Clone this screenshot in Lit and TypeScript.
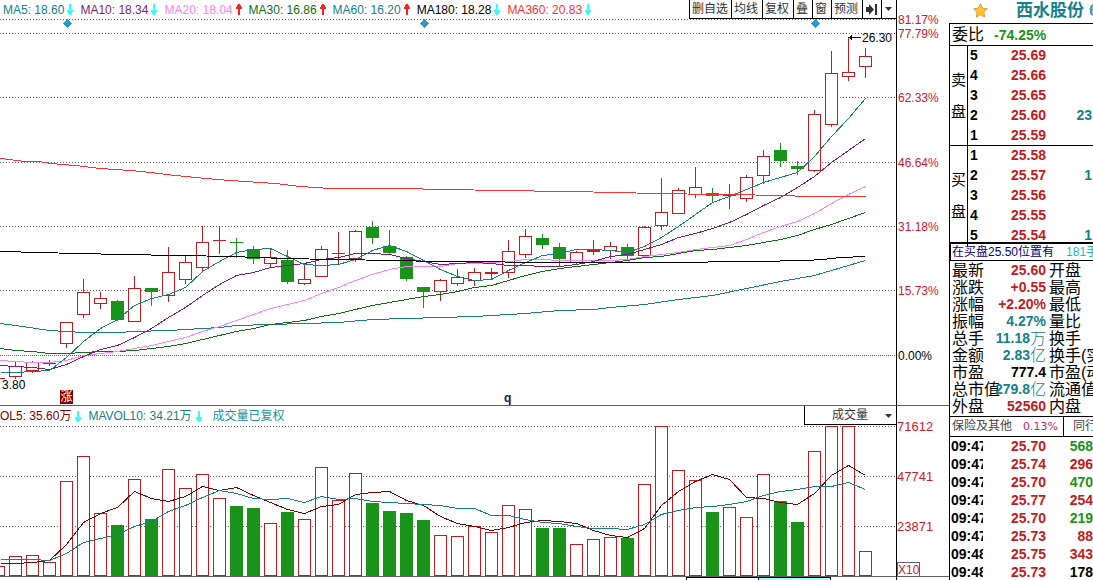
import { LitElement, html, svg, css } from "lit";
import { customElement } from "lit/decorators.js";
import { classMap } from "lit/directives/class-map.js";

const PLOT_W = 896;
const PRICE_TOP = 19;
const PRICE_H = 386;
const VOL_TOP = 425;
const VOL_H = 151;

// direction, high, body top, body bottom, low, volume top
type Bar = [string, number, number, number, number, number];
const FIRST_X = -2;
const STEP = 17;
const bars: Bar[] = [
  ["u", 378, 378, 378, 378, 566], ["u", 362, 366, 376, 378, 556], ["u", 361, 362, 370, 372, 555],
  ["u", 360, 363, 363, 365, 562], ["u", 322, 322, 343, 347, 481], ["u", 279, 292, 314, 317, 456],
  ["u", 292, 298, 303, 308, 513], ["d", 300, 301, 319, 320, 525], ["u", 276, 288, 321, 321, 479],
  ["d", 288, 288, 291, 305, 519], ["u", 247, 272, 295, 301, 469], ["u", 255, 262, 279, 283, 488],
  ["u", 226, 242, 267, 270, 474], ["u", 226, 240, 240, 253, 498], ["d", 238, 242, 242, 257, 506],
  ["d", 246, 249, 258, 263, 508], ["u", 248, 257, 263, 267, 523], ["d", 250, 260, 281, 283, 512],
  ["u", 265, 279, 283, 284, 519], ["u", 246, 249, 276, 276, 467], ["u", 232, 253, 253, 263, 500],
  ["u", 230, 231, 258, 261, 473], ["d", 221, 227, 237, 243, 503], ["d", 230, 246, 252, 254, 511],
  ["d", 256, 257, 278, 280, 513], ["d", 287, 287, 291, 307, 520], ["u", 279, 280, 291, 300, 535],
  ["u", 269, 277, 283, 285, 536], ["u", 268, 272, 280, 285, 526], ["u", 268, 272, 273, 279, 532],
  ["u", 240, 251, 272, 277, 505], ["u", 229, 236, 254, 257, 509], ["d", 234, 238, 244, 248, 528],
  ["d", 243, 247, 258, 265, 528], ["u", 251, 252, 262, 263, 544], ["u", 240, 250, 251, 254, 539],
  ["u", 242, 246, 250, 258, 537], ["d", 244, 247, 255, 258, 538], ["u", 226, 227, 255, 255, 484],
  ["u", 178, 212, 225, 229, 426], ["u", 188, 190, 213, 213, 470], ["u", 167, 187, 194, 197, 480],
  ["d", 188, 193, 195, 202, 512], ["u", 184, 195, 195, 208, 507], ["u", 175, 177, 198, 201, 517],
  ["u", 150, 156, 175, 183, 474], ["d", 143, 150, 160, 166, 501], ["d", 161, 166, 168, 174, 522],
  ["u", 110, 114, 170, 171, 451], ["u", 51, 73, 124, 126, 426], ["u", 37, 72, 76, 80, 426],
  ["u", 48, 56, 66, 77, 551],
];

const perBar = (...ys: number[]): number[][] => ys.map((y, i) => [i ? FIRST_X + i * STEP : 0, y]);

const priceLines: { cls: string; pts: number[][] }[] = [
  { cls: "teal", pts: [[0, 323], [15, 325], [49, 330], [83, 332], [117, 332], [134, 331], [168, 330], [202, 328], [219, 327], [236, 325], [270, 324], [304, 323], [338, 322], [372, 319], [406, 318], [440, 317], [474, 316], [508, 314], [525, 313], [559, 310], [593, 309], [610, 307], [644, 304], [678, 299], [712, 295], [746, 288], [780, 281], [814, 275], [831, 270], [848, 265], [865, 260]] },
  { cls: "green", pts: perBar(348, 350, 351, 353, 353, 352, 351, 351, 350, 348, 346, 343, 339, 335, 331, 328, 324, 322, 320, 316, 313, 309, 305, 302, 299, 296, 294, 291, 287, 285, 280, 275, 271, 268, 266, 264, 262, 260, 257, 256, 253, 250, 249, 247, 245, 242, 239, 235, 229, 224, 218, 212) },
  { cls: "pink", pts: perBar(360, 361, 362, 362, 360, 355, 353, 351, 348, 345, 341, 337, 331, 326, 320, 314, 308, 304, 300, 293, 287, 280, 274, 269, 266, 266, 266, 263, 263, 262, 261, 259, 259, 260, 260, 260, 260, 259, 256, 254, 252, 249, 247, 245, 239, 232, 226, 221, 213, 203, 194, 186) },
  { cls: "purple", pts: perBar(365, 366, 367, 369, 364, 356, 349, 345, 337, 328, 317, 307, 295, 284, 275, 272, 267, 265, 263, 259, 257, 253, 253, 254, 258, 261, 264, 263, 262, 263, 265, 265, 266, 266, 264, 261, 256, 254, 249, 244, 237, 233, 228, 222, 214, 205, 197, 187, 176, 162, 150, 138) },
  { cls: "teal", pts: perBar(372, 372, 371, 370, 357, 341, 328, 319, 305, 298, 294, 287, 271, 261, 252, 249, 248, 256, 264, 265, 264, 259, 250, 245, 251, 260, 269, 276, 280, 279, 270, 262, 255, 253, 249, 249, 250, 252, 246, 237, 226, 214, 202, 196, 189, 182, 177, 172, 156, 136, 118, 98) },
  { cls: "black", pts: [[0, 251], [40, 252], [75, 253], [125, 254], [175, 255], [236, 256], [253, 257], [287, 258], [330, 259], [398, 260], [432, 261], [500, 261], [508, 262], [703, 262], [712, 261], [755, 261], [805, 260], [822, 259], [840, 257], [865, 256]] },
  { cls: "red", pts: [[0, 158], [25, 161], [38, 161], [50, 163], [75, 165], [100, 168], [130, 170], [150, 172], [175, 175], [205, 178], [230, 180], [275, 183], [300, 186], [330, 188], [397, 188], [448, 189], [499, 190], [567, 191], [618, 192], [653, 193], [720, 194], [788, 195], [800, 196], [865, 196]] },
];

const volumeLines: { cls: string; pts: number[][] }[] = [
  { cls: "maroon", pts: perBar(563, 563, 562, 560, 544, 522, 513, 507, 491, 498, 501, 496, 486, 490, 487, 495, 502, 509, 513, 506, 504, 494, 492, 491, 500, 505, 516, 523, 526, 530, 527, 522, 520, 521, 523, 530, 535, 537, 528, 505, 491, 481, 474, 479, 497, 498, 502, 504, 493, 475, 465, 475) },
  { cls: "teal", pts: perBar(559, 559, 559, 560, 553, 542, 538, 534, 526, 521, 511, 505, 497, 490, 493, 498, 499, 498, 502, 496, 499, 498, 501, 502, 503, 504, 505, 508, 508, 515, 515, 519, 522, 523, 526, 528, 528, 529, 524, 514, 510, 507, 506, 504, 501, 495, 491, 489, 486, 486, 482, 489) },
];

const priceTicks: [number, string][] = [[19, "81.17%"], [33, "77.79%"], [97, "62.33%"], [162, "46.64%"], [226, "31.18%"], [290, "15.73%"], [355, "0.00%"]];
const volumeTicks: [number, string][] = [[426, "71612"], [476, "47741"], [526, "23871"]];

const averages: [string, string, string, boolean][] = [
  ["MA5", "18.60", "teal", false], ["MA10", "18.34", "purple", false], ["MA20", "18.04", "pink", true],
  ["MA30", "16.86", "green", true], ["MA60", "16.20", "teal", true], ["MA180", "18.28", "black", false],
  ["MA360", "20.83", "red", false],
];

const asks: [string, string, string][] = [["5", "25.69", ""], ["4", "25.66", ""], ["3", "25.65", ""], ["2", "25.60", "23"], ["1", "25.59", ""]];
const bids: [string, string, string][] = [["1", "25.58", ""], ["2", "25.57", "1"], ["3", "25.56", ""], ["4", "25.55", ""], ["5", "25.54", "1"]];

const stats: [string, string, string, string, string][] = [
  ["最新", "25.60", "", "up", "开盘"], ["涨跌", "+0.55", "", "up", "最高"], ["涨幅", "+2.20%", "", "up", "最低"],
  ["振幅", "4.27%", "", "flat", "量比"], ["总手", "11.18", "万", "flat", "换手"], ["金额", "2.83", "亿", "flat", "换手(实)"],
  ["市盈", "777.4", "", "", "市盈(动)"], ["总市值", "279.8", "亿", "flat", "流通值"], ["外盘", "52560", "", "up", "内盘"],
];

const trades: [string, string, string, string][] = [
  ["09:47", "25.70", "568", "down"], ["09:47", "25.74", "296", "up"], ["09:47", "25.70", "470", "down"], ["09:47", "25.77", "254", "up"],
  ["09:47", "25.70", "219", "down"], ["09:47", "25.73", "88", "up"], ["09:48", "25.75", "343", "up"], ["09:48", "25.73", "178", ""],
];

const trendArrow = (up: boolean) => html`<svg class="trend ${up ? "rising" : "falling"}" width="6" height="11" viewBox="0 0 6 11" aria-hidden="true">
  <path d=${up ? "M2 11V5H0V3H1V1H2V0H4V1H5V3H6V5H4V11Z" : "M2 0V6H0V8H1V10H2V11H4V10H5V8H6V6H4V0Z"} /></svg>`;

const caret = html`<svg class="caret" width="7" height="4" viewBox="0 0 7 4" aria-hidden="true"><path d="M0 0H7L3.5 4Z" /></svg>`;

@customElement("app-root")
export class AppRoot extends LitElement {
  static styles = css`
    :host { display: grid; grid-template-columns: minmax(0, 1fr) 144px; height: 100vh; overflow: hidden; background: #fff; color: #000;
      font: 12px/18px "Liberation Sans", "Noto Sans CJK SC", sans-serif; white-space: nowrap; }
    * { box-sizing: border-box; }
    svg { display: block; }
    button, select { font: inherit; color: #333; background: #fff; margin: 0; border: 0 solid #000; border-radius: 0; }

    .charts { display: grid; grid-template-columns: minmax(0, 1fr) 52px; grid-template-rows: 19px 387px 19px 152px 1fr; }
    .left { border-right: 1px solid #000; min-width: 0; }
    .ruled { border-bottom: 1px solid #606060; }
    .head { display: flex; justify-content: space-between; overflow: hidden; }
    .legend { display: flex; gap: 7px; padding-left: 3px; min-width: 0; overflow: hidden; }
    .legend.volume { padding: 1px 0 0; }
    .entry { display: flex; gap: 3px; align-items: center; flex: none; }
    .volume .entry { gap: 4px; }
    .note { color: #1890a0; padding-left: 4px; }
    .tools { display: flex; flex: none; }
    .tools button { display: flex; align-items: center; padding: 0 3px 0 2px; border-width: 0 0 1px 1px; height: 19px; line-height: 20px; }
    .tools .pad { padding: 0 4px 0 2px; }
    .tools .icon { padding: 0 4px 0 3px; }
    .picker { display: grid; flex: none; width: 92px; }
    .picker select { grid-area: 1 / 1; appearance: none; padding: 0 0 0 27px; border-width: 0 0 1px 1px; height: 19px; }
    .picker .caret { grid-area: 1 / 1; justify-self: end; align-self: center; margin-right: 4px; pointer-events: none; }
    .caret, .skip { fill: #333; }

    .trend.falling { fill: #3ff; }
    .trend.rising { fill: #ff2020; }
    .teal { color: #13808a; } .purple { color: #801b77; } .pink { color: #ff80ff; } .green { color: #126e12; }
    .black { color: #000; } .red { color: #ff3030; } .maroon { color: #800000; }

    .plot { position: relative; overflow: hidden; }
    .canvas { width: 100%; shape-rendering: crispEdges; }
    .canvas * { vector-effect: non-scaling-stroke; }
    .grid { stroke: #606060; stroke-dasharray: 1 2; }
    .zero { stroke-dasharray: 1 1; }
    .line { fill: none; stroke: currentColor; }
    .u { stroke: #c01c22; fill: #fff; }
    .d { stroke: #1a931a; fill: #1a931a; }
    .diamond { fill: #2b9ac8; }
    .pointer { stroke: #000; }
    .mark { position: absolute; line-height: 14px; }
    .badge { background: #800000; color: #fff; width: 13px; text-align: center; }
    .event { color: #0a2050; font-weight: 700; }

    .axis { overflow: visible; fill: #c8202c; }
    .axis .base { fill: #000; }
    .axis .big { font-size: 13px; }
    .unit { fill: none; stroke: #606060; shape-rendering: crispEdges; }
    .strip { display: flex; justify-content: flex-end; padding-right: 65px; }
    .tab { width: 72px; border: solid #000; border-width: 1px 0 0 1px; }
    .tab.on { width: 73px; background: #9ff; border-right-width: 1px; }

    .quote { display: flex; flex-direction: column; min-width: 0; overflow: hidden; }
    .name { display: flex; align-items: center; height: 23px; flex: none; margin: 0; padding: 0 0 2px 24px; gap: 28px; font-size: 17px; line-height: 20px; font-weight: 700; color: #13808a; }
    .name svg, .code { flex: none; }
    .stock { display: flex; gap: 5px; flex: none; }
    .code { color: #2fa3b5; }
    .panel { display: flex; flex-direction: column; flex: 1; min-height: 0; border: solid #000; border-width: 1px 0 0 1px; }
    .ratio { display: flex; gap: 10px; height: 22px; padding-left: 2px; line-height: 22px; border-bottom: 1px solid #000; font-size: 16px; }
    .num { font-size: 14px; font-weight: 700; }
    .up { color: #c01c22; } .down { color: #1a931a; } .flat { color: #13808a; }
    .book { display: grid; grid-template-columns: 18px minmax(0, 1fr); border-bottom: 1px solid #000; height: 100px; }
    .book.last { height: 98px; border-bottom-width: 2px; }
    .side { display: flex; flex-direction: column; align-items: center; justify-content: center; gap: 16px; font-size: 15px; line-height: 16px; border-right: 1px solid #000; }
    table { width: 100%; table-layout: fixed; border-collapse: collapse; font-size: 14px; font-weight: 700; }
    th, td { padding: 0; text-align: right; overflow: hidden; font-weight: 700; vertical-align: top; }
    th { text-align: left; }
    .book tr { height: 20px; line-height: 18px; }
    .book th { width: 17px; padding-left: 2px; }
    .book .price { width: 61px; }
    .book .size { padding-right: 1px; }
    .hint { display: flex; gap: 12px; height: 17px; line-height: 16px; padding-left: 1px; color: #00007a; border: solid #000; border-width: 0 0 1px 1px; }
    .hint b { font-weight: 400; color: #18bcbc; }
    .stats { margin: 0; padding: 1px 0 1px 2px; display: grid; grid-template-columns: 32px 62px max-content; grid-auto-rows: 17px; line-height: 17px; font-size: 16px; }
    .stats dt, .stats dd { margin: 0; min-width: 0; }
    .stats dd { display: flex; justify-content: flex-end; }
    .stats .next { padding-left: 3px; }
    .unitword { font-weight: 300; }
    .sector { display: flex; height: 21px; line-height: 19px; border: solid #000; border-width: 1px 0; color: #444; padding-left: 2px; }
    .change { font: 11px/19px "DejaVu Sans", sans-serif; color: #c8206c; padding: 0 5px 0 11px; border-right: 1px solid #000; width: 53px; }
    .peer { padding-left: 9px; }
    .trades tr { height: 18px; line-height: 18px; }
    .trades .time { width: 33px; padding-left: 1px; text-overflow: clip; }
    .trades .price { width: 63px; }
  `;

  private line(l: { cls: string; pts: number[][] }) {
    return svg`<polyline class="line ${l.cls}" points=${l.pts.map(([x, y]) => `${x + 0.5},${y + 0.5}`).join(" ")} />`;
  }

  private candle([dir, high, top, bottom, low]: Bar, i: number) {
    const x = FIRST_X + i * STEP;
    return svg`<g class=${dir}>
      ${high === low ? "" : svg`<line x1=${x + 0.5} x2=${x + 0.5} y1=${high} y2=${low + 1} />`}
      ${top === bottom
        ? svg`<line x1=${x - 6} x2=${x + 7} y1=${top + 0.5} y2=${top + 0.5} />`
        : svg`<rect x=${x - 5.5} y=${top + 0.5} width="12" height=${bottom - top} />`}
    </g>`;
  }

  private gridLine(y: number, zero = false) {
    return svg`<line class="grid ${zero ? "zero" : ""}" x1="0" x2=${PLOT_W} y1=${y + 0.5} y2=${y + 0.5} />`;
  }

  private at(x: number, y: number) {
    return `left:${(x / PLOT_W) * 100}%;top:${y - PRICE_TOP}px`;
  }

  private bookSide(word: string, rows: [string, string, string][], last: boolean) {
    return html`<div class=${classMap({ book: true, last })}>
      <div class="side">${[...word].map((c) => html`<span>${c}</span>`)}</div>
      <table>${rows.map(([n, p, v]) => html`<tr><th scope="row">${n}</th><td class="price up">${p}</td><td class="size flat">${v}</td></tr>`)}</table>
    </div>`;
  }

  render() {
    return html`
      <main class="charts">
        <div class="left head">
          <div class="legend">${averages.map(([n, v, cls, up]) => html`<span class="entry ${cls}">${n}: ${v}${trendArrow(up)}</span>`)}</div>
          <div class="tools">
            <button>删自选</button><button class="pad">均线</button><button class="pad">复权</button><button class="pad">叠</button><button class="pad">窗</button><button class="pad">预测</button>
            <button class="icon" aria-label="最新"><svg class="skip" width="11" height="11" viewBox="0 0 11 11"><path d="M0 3H3V0L8 5.5L3 11V8H0ZM9 0H11V11H9Z" /></svg></button>
            <button class="icon" aria-label="更多">${caret}</button>
          </div>
        </div>
        <div></div>

        <div class="left ruled plot">
          <svg class="canvas" height=${PRICE_H} viewBox="0 ${PRICE_TOP} ${PLOT_W} ${PRICE_H}" preserveAspectRatio="none">
            ${priceTicks.map(([y]) => this.gridLine(y, y === 355))}
            ${bars.map((b, i) => this.candle(b, i))}
            ${priceLines.map((l) => this.line(l))}
            ${[67, 424, 815].map((x) => svg`<path class="diamond" d="M${x - 4} 23.5L${x + 0.5} 19L${x + 5} 23.5L${x + 0.5} 28Z" />`)}
            <path class="pointer" d="M848 37.5H861M850.5 36V39M851.5 35V40" />
          </svg>
          <span class="mark" style=${this.at(862, 31)}>26.30</span>
          <span class="mark" style=${this.at(2, 378)}>3.80</span>
          <span class="mark badge" style=${this.at(60, 390)}>涨</span>
          <span class="mark event" style=${this.at(504, 391)}>q</span>
        </div>
        <div class="ruled">
          <svg class="axis" width="52" height=${PRICE_H} viewBox="0 ${PRICE_TOP} 52 ${PRICE_H}">
            ${priceTicks.map(([y, t]) => svg`<text class=${y === 355 ? "base" : ""} x="1" y=${y + 5}>${t}</text>`)}
          </svg>
        </div>

        <div class="left head">
          <div class="legend volume">
            <span class="entry maroon">OL5: 35.60万${trendArrow(false)}</span>
            <span class="entry teal">MAVOL10: 34.21万${trendArrow(false)}</span>
            <span class="note">成交量已复权</span>
          </div>
          <div class="picker"><select aria-label="指标"><option>成交量</option></select>${caret}</div>
        </div>
        <div></div>

        <div class="left ruled plot">
          <svg class="canvas" height=${VOL_H} viewBox="0 ${VOL_TOP} ${PLOT_W} ${VOL_H}" preserveAspectRatio="none">
            ${volumeTicks.map(([y]) => this.gridLine(y))}
            ${bars.map(([dir, , , , , v], i) => svg`<rect class=${dir} x=${FIRST_X + i * STEP - 5.5} y=${v + 0.5} width="12" height=${575 - v} />`)}
            ${volumeLines.map((l) => this.line(l))}
          </svg>
        </div>
        <div class="ruled">
          <svg class="axis" width="52" height=${VOL_H} viewBox="0 ${VOL_TOP} 52 ${VOL_H}">
            ${volumeTicks.map(([y, t]) => svg`<text class="big" x="0" y=${y + 5}>${t}</text>`)}
            <rect class="unit" x="0.5" y="562.5" width="22" height="14" />
            <text x="1" y="574">X10</text>
          </svg>
        </div>

        <div class="left strip"><div class="tab"></div><div class="tab on"></div></div>
        <div></div>
      </main>

      <aside class="quote">
        <h1 class="name">
          <svg width="15" height="15" viewBox="0 0 15 15" aria-hidden="true"><path d="M7.5 .8L9.6 5.1L14.3 5.8L10.9 9.2L11.7 14L7.5 11.8L3.3 14L4.1 9.2L.7 5.8L5.4 5.1Z" fill="#ffc52e" stroke="#e0983c" /></svg>
          <span class="stock"><span>西水股份</span><span class="code">6</span></span>
        </h1>
        <div class="panel">
          <div class="ratio"><span>委比</span><span class="num down">-74.25%</span></div>
          ${this.bookSide("卖盘", asks, false)}
          ${this.bookSide("买盘", bids, true)}
          <div class="hint"><span>在买盘25.50位置有</span><b>181手</b></div>
          <dl class="stats">
            ${stats.map(([k, v, unit, cls, next]) => html`<dt>${k}</dt><dd class=${cls}><span class="num">${v}</span><span class="unitword">${unit}</span></dd><dt class="next">${next}</dt>`)}
          </dl>
          <div class="sector"><span>保险及其他</span><span class="change">0.13%</span><span class="peer">同行</span></div>
          <table class="trades">
            ${trades.map(([t, p, v, cls]) => html`<tr><td class="time">${t}</td><td class="price up">${p}</td><td class=${cls}>${v}</td></tr>`)}
          </table>
        </div>
      </aside>
    `;
  }
}
